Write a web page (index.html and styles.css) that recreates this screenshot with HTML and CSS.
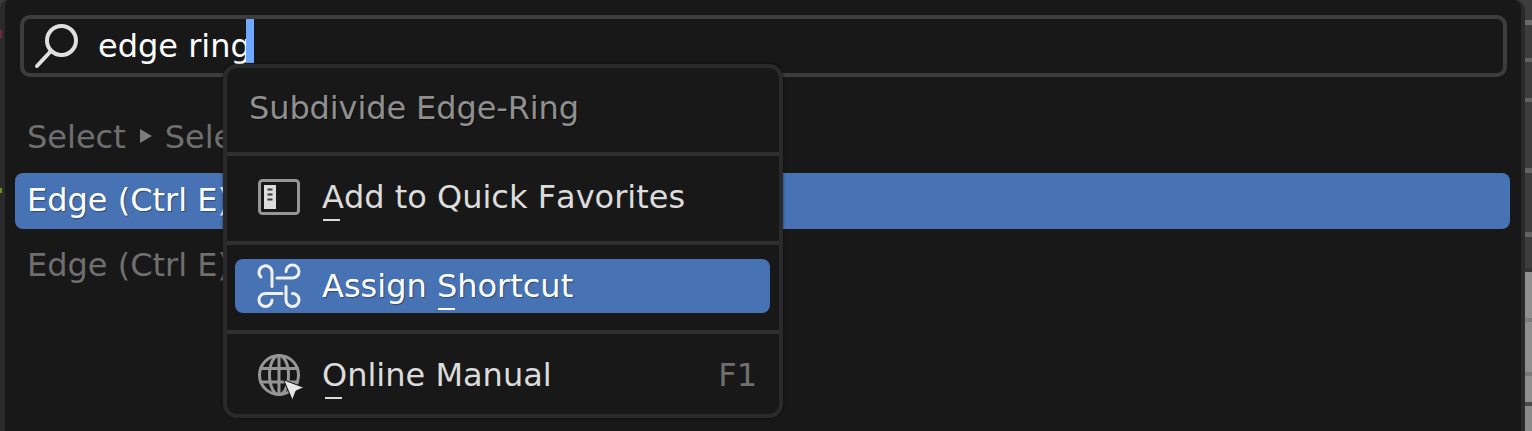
FILE: index.html
```html
<!DOCTYPE html>
<html lang="en">
<head>
<meta charset="utf-8">
<title>Operator search</title>
<link rel="stylesheet" href="styles.css">
</head>
<body>
<div class="scene">
  <span class="speck speck-red"></span>
  <span class="speck speck-green"></span>
  <main class="panel">
    <div class="search">
      <svg class="search-icon" viewBox="0 0 46 46" aria-hidden="true">
        <circle cx="27.5" cy="17.5" r="14.5"/>
        <path d="M17 28 3 43"/>
      </svg>
      <span class="query">edge ring</span><span class="caret"></span>
    </div>
    <ul class="results">
      <li class="crumb">Select<span class="arrow"></span>Sele</li>
      <li class="result result-active">Edge (Ctrl E)</li>
      <li class="result result-dim">Edge (Ctrl E)</li>
    </ul>
  </main>
  <aside class="menu">
    <div class="menu-title">Subdivide Edge-Ring</div>
    <hr class="rule">
    <div class="item item-first">
      <svg class="icon" viewBox="0 0 42 36" aria-hidden="true">
        <rect class="frame" x="1.500" y="1.500" width="39" height="33" rx="3"/>
        <rect class="fill" x="6" y="6" width="12" height="24"/>
        <path class="notch" d="M9.500 10.500h5M9.500 15.500h5M9.500 20.500h5"/>
      </svg>
      <span class="label"><span class="mn">A</span>dd to Quick Favorites</span>
    </div>
    <hr class="rule">
    <div class="item item-active">
      <svg class="icon icon-bright" viewBox="0 0 42 42" aria-hidden="true">
        <path d="M14 21.500V7.500A6.500 6.500 0 1 0 3 12"/>
        <path d="M19 13H34.500A6.500 6.500 0 1 0 28 6.500"/>
        <path d="M24 28.500H7.500A6.500 6.500 0 1 0 14 35"/>
        <path d="M28 21.500V35A6.500 6.500 0 1 0 34.500 28.500"/>
      </svg>
      <span class="label">Assign <span class="mn">S</span>hortcut</span>
    </div>
    <hr class="rule">
    <div class="item item-last">
      <svg class="icon" viewBox="0 0 42 42" aria-hidden="true">
        <circle cx="21" cy="21" r="19.500"/>
        <ellipse cx="21" cy="21" rx="9.500" ry="19.500"/>
        <path d="M21 2v38M2.500 14.500h37M2.500 28h37"/>
        <path class="cursor" d="M26 26 46 33.500l-8 3.500L34.500 46z"/>
      </svg>
      <span class="label"><span class="mn mn-o">O</span>nline Manual</span>
      <span class="key">F1</span>
    </div>
  </aside>
</div>
</body>
</html>
```
FILE: styles.css
```css
* { box-sizing: border-box; margin: 0; padding: 0; }
html, body { width: 1532px; height: 431px; overflow: hidden; background: #2a2a2a; }
body { font-family: "DejaVu Sans", sans-serif; font-size: 32px; font-kerning: none; }

.scene {
  width: 1532px;
  height: 431px;
  position: relative;
  overflow: hidden;
  background:
    linear-gradient(#6a6a6a, #6a6a6a) 0 20px / 100% 5px no-repeat,
    linear-gradient(#626262, #626262) 0 58px / 100% 4px no-repeat,
    linear-gradient(#626262, #626262) 0 98px / 100% 4px no-repeat,
    linear-gradient(#626262, #626262) 0 168px / 100% 5px no-repeat,
    linear-gradient(#626262, #626262) 0 232px / 100% 5px no-repeat,
    linear-gradient(#7a7a7a, #7a7a7a) 0 318px / 100% 4px no-repeat,
    linear-gradient(#7a7a7a, #7a7a7a) 0 372px / 100% 4px no-repeat,
    linear-gradient(#3d3d3d 0 268px, #333 268px 272px, #909090 272px 402px, #4a4a4a 402px 406px, #8a8a8a 406px);
}

.speck { position: absolute; left: 0; width: 2px; z-index: 1; }
.speck-red { top: 30px; height: 8px; background: #6d2a3a; }
.speck-green { top: 188px; height: 5px; background: #6f8f20; }

.panel {
  width: 1525px;
  height: 441px;
  padding: 15px 15px 0;
  background: #181818;
  border: 4px solid #2a2a2a;
  border-left-width: 5px;
  border-top: 0;
  border-radius: 8px 10px 0 0;
}

.search {
  display: flex;
  align-items: center;
  width: 1487px;
  height: 62px;
  padding-left: 10px;
  border: 4px solid #3d3d3d;
  border-radius: 10px;
}
.search-icon { width: 46px; height: 46px; flex: none; fill: none; stroke: #e0e0e0; stroke-width: 4; stroke-linecap: round; }
.query { margin-left: 18px; color: #fff; line-height: 50px; }
.caret { width: 8px; height: 44px; margin: 0 0 10px -5px; background: #71a8ff; }

.results { list-style: none; margin: 29px 0 0 -5px; }
.crumb { height: 67px; padding: 0 12px; line-height: 62px; color: #6f6f6f; white-space: nowrap; }
.arrow {
  display: inline-block;
  margin: 0 13px 0 14px;
  border-left: 12px solid #7d7d7d;
  border-top: 7px solid transparent;
  border-bottom: 7px solid transparent;
  vertical-align: 5px;
}
.result { height: 56px; padding: 0 12px; line-height: 55px; white-space: nowrap; border-radius: 8px; }
.result-active { width: 1495px; background: #4772b3; color: #fff; text-shadow: 1px 1px 1px rgba(0, 0, 0, .35); }
.result-dim { margin-top: 9px; color: #6f6f6f; }

.menu {
  position: absolute;
  left: 223px;
  top: 64px;
  width: 560px;
  height: 354px;
  background: #181818;
  border: 4px solid #2a2a2a;
  border-radius: 14px;
  box-shadow: 0 0 3px rgba(0, 0, 0, .5);
  color: #dcdcdc;
}
.menu-title { height: 84px; padding-left: 22px; line-height: 80px; letter-spacing: -.1px; color: #8f8f8f; text-shadow: 1px 1px 1px rgba(0, 0, 0, .5); }
.rule { height: 4px; border: 0; background: #2f2f2f; }
.item { display: flex; align-items: center; margin: 0 9px 0 8px; padding-left: 23px; border-radius: 8px; white-space: nowrap; }
.item-first { height: 85px; padding-bottom: 4px; }
.item-active { height: 54px; margin-top: 14px; margin-bottom: 17px; background: #4772b3; color: #fff; text-shadow: 1px 1px 1px rgba(0, 0, 0, .35); }
.item-last { height: 80px; padding-top: 2px; }
.label { margin-left: 22px; }
.key { margin-left: auto; padding-right: 13px; color: #6f6f6f; }

.mn { position: relative; display: inline-block; }
.mn::after {
  content: "";
  position: absolute;
  left: 1px;
  bottom: -5px;
  width: 17px;
  height: 2px;
  background: currentColor;
}
.mn-o::after { left: 3px; }

.icon { width: 42px; height: 42px; flex: none; overflow: visible; fill: none; stroke: #969696; stroke-width: 3; stroke-linecap: round; }
.icon .fill { fill: #dcdcdc; stroke: none; }
.icon .notch { stroke: #3a3a3a; stroke-width: 2; stroke-linecap: butt; }
.icon .cursor { fill: #e6e6e6; stroke: #181818; stroke-width: 1; stroke-linejoin: round; }
.icon-bright { stroke: #f0f0f0; }
```
